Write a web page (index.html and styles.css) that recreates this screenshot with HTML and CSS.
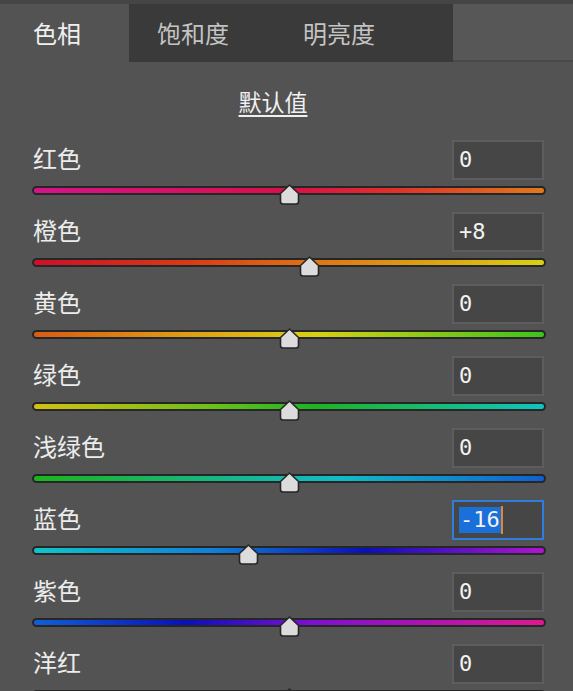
FILE: index.html
```html
<!DOCTYPE html>
<html lang="zh-CN">

<head>
    <meta charset="UTF-8">
    <title>色相/饱和度</title>
    <link rel="stylesheet" href="styles.css">
</head>

<body>
    <div id="tabs">
        <div class="tab active">色相</div>
        <div class="tab tab-mid">饱和度</div>
        <div class="tab tab-last">明亮度</div>
        <div class="tab-fill"></div>
    </div>

    <div id="panel">
        <div class="preset"><span>默认值</span></div>

        <!-- one row per colour range -->
        <div class="row">
            <div class="row-head">
                <span class="label">红色</span>
                <div class="value">0</div>
            </div>
            <div class="track red">
                <div class="thumb" style="left: 50%;"></div>
            </div>
        </div>

        <div class="row">
            <div class="row-head">
                <span class="label">橙色</span>
                <div class="value">+8</div>
            </div>
            <div class="track orange">
                <div class="thumb" style="left: 54%;"></div>
            </div>
        </div>

        <div class="row">
            <div class="row-head">
                <span class="label">黄色</span>
                <div class="value">0</div>
            </div>
            <div class="track yellow">
                <div class="thumb" style="left: 50%;"></div>
            </div>
        </div>

        <div class="row">
            <div class="row-head">
                <span class="label">绿色</span>
                <div class="value">0</div>
            </div>
            <div class="track green">
                <div class="thumb" style="left: 50%;"></div>
            </div>
        </div>

        <div class="row">
            <div class="row-head">
                <span class="label">浅绿色</span>
                <div class="value">0</div>
            </div>
            <div class="track aqua">
                <div class="thumb" style="left: 50%;"></div>
            </div>
        </div>

        <div class="row">
            <div class="row-head">
                <span class="label">蓝色</span>
                <div class="value focused"><span class="selected">-16</span><span class="caret"></span></div>
            </div>
            <div class="track blue">
                <div class="thumb" style="left: 42%;"></div>
            </div>
        </div>

        <div class="row">
            <div class="row-head">
                <span class="label">紫色</span>
                <div class="value">0</div>
            </div>
            <div class="track purple">
                <div class="thumb" style="left: 50%;"></div>
            </div>
        </div>

        <div class="row">
            <div class="row-head">
                <span class="label">洋红</span>
                <div class="value">0</div>
            </div>
            <div class="track magenta">
                <div class="thumb" style="left: 50%;"></div>
            </div>
        </div>
    </div>
</body>

</html>
```

FILE: styles.css
```css
body {
    margin: 0;
    padding: 0;
    background-color: #535353;
    font-family: "Noto Sans CJK SC", "Noto Sans", sans-serif;
    color: #e8e8e8;
    height: 691px;
    overflow: hidden;
}

#tabs {
    display: flex;
    height: 58px;
    border-top: 4px solid #454545;
}

.tab {
    box-sizing: border-box;
    height: 58px;
    line-height: 58px;
    font-size: 24px;
    color: #c4c4c4;
    background-color: #3a3a3a;
}

.tab.active {
    width: 129px;
    padding-left: 33px;
    color: #f0f0f0;
    background-color: #535353;
}

.tab-mid {
    width: 146px;
    padding-left: 28px;
}

.tab-last {
    width: 178px;
    padding-left: 28px;
}

.tab-fill {
    flex: 1;
    background-color: #575757;
    border-bottom: 2px solid #484848;
    box-sizing: border-box;
}

#panel {
    padding-top: 22px;
}

.preset {
    text-align: center;
    height: 56px;
}

.preset span {
    display: inline-block;
    margin-left: -27px;
    font-size: 23px;
    line-height: 34px;
    color: #f0f0f0;
    text-decoration: underline;
    text-underline-offset: 4px;
}

.row {
    height: 72px;
}

.row-head {
    display: flex;
    justify-content: space-between;
    align-items: center;
    height: 40px;
    padding: 0 29px 0 33px;
}

.label {
    font-size: 24px;
    line-height: 40px;
    margin-top: -4px;
    color: #ececec;
}

.value {
    box-sizing: border-box;
    width: 92px;
    height: 40px;
    padding: 0 0 0 5px;
    background-color: #464646;
    border: 2px solid #5d5d5d;
    font-family: "DejaVu Sans Mono", monospace;
    font-size: 22px;
    line-height: 34px;
    color: #f2f2f2;
    display: flex;
    align-items: center;
}

.value.focused {
    border-color: #2f7ddc;
}

.selected {
    background-color: #1a6fd8;
    line-height: 26px;
    padding: 0 1px;
}

.caret {
    display: inline-block;
    width: 2px;
    height: 28px;
    background-color: #e08a2c;
}

.track {
    position: relative;
    box-sizing: border-box;
    height: 9px;
    margin: 6px 27px 0 32px;
    border: 2px solid #262626;
    border-radius: 5px;
}

.thumb {
    position: absolute;
    top: -4px;
    width: 21px;
    height: 21px;
    margin-left: -10px;
    background: url("data:image/svg+xml;utf8,<svg xmlns='http://www.w3.org/2000/svg' width='21' height='21' viewBox='0 0 21 21'><path d='M10.5 1 L19.5 9.5 L19.5 17.5 Q19.5 20 17 20 L4 20 Q1.5 20 1.5 17.5 L1.5 9.5 Z' fill='%23dcdcdc' stroke='%23262626' stroke-width='1.6' stroke-linejoin='round'/></svg>") no-repeat;
}

.red {
    background: linear-gradient(to right, #d4148a, #d8104a 50%, #e0302a 70%, #e07a1c);
}

.orange {
    background: linear-gradient(to right, #cc1028, #d83a14 30%, #e07414 55%, #d8d014);
}

.yellow {
    background: linear-gradient(to right, #d85c14, #e0a814 35%, #d8d014 55%, #3cc41c);
}

.green {
    background: linear-gradient(to right, #d4c014, #6cc018 35%, #1cb424 55%, #10c4c0);
}

.aqua {
    background: linear-gradient(to right, #1cb41c, #14b890 40%, #10bcc8 60%, #1060d0);
}

.blue {
    background: linear-gradient(to right, #10c4c8, #1080d8 35%, #0a10b8 65%, #b014d0);
}

.purple {
    background: linear-gradient(to right, #1060d8, #0a10b8 30%, #8010d0 55%, #e01890);
}

.magenta {
    background: linear-gradient(to right, #8010d0, #d014b0 50%, #e01050);
}
```
